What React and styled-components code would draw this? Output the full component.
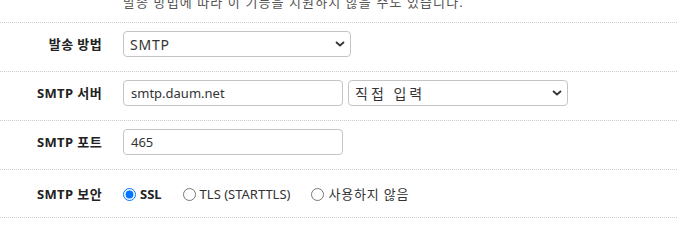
import React, { useState } from 'react';
import styled, { createGlobalStyle } from 'styled-components';

const GlobalStyle = createGlobalStyle`
  html, body {
    margin: 0;
    padding: 0;
    background: #fff;
    overflow: hidden;
  }
  body {
    font-family: "Noto Sans", "Noto Sans CJK KR", sans-serif;
    font-size: 13px;
    color: #333;
  }
`;

const securityOptions = [
  { value: 'ssl', text: 'SSL', spacing: 0 },
  { value: 'tls', text: 'TLS (STARTTLS)', spacing: 0 },
  { value: 'none', text: '사용하지 않음', spacing: 0.8 },
];

// 메일 발송 설정 폼
export default function App() {
  const [method, setMethod] = useState('smtp');
  const [server, setServer] = useState('smtp.daum.net');
  const [preset, setPreset] = useState('manual');
  const [port, setPort] = useState('465');
  const [secure, setSecure] = useState('ssl');

  return (
    <>
      <GlobalStyle />
      <Form>
        <HelpRow>
          <Label />
          <Help>발송 방법에 따라 이 기능을 지원하지 않을 수도 있습니다.</Help>
        </HelpRow>

        <Row>
          <Label>발송 방법</Label>
          <Field>
            <SelectBox width={228}>
              <Select value={method} onChange={(e) => setMethod(e.target.value)}>
                <option value="smtp">SMTP</option>
                <option value="mail">PHP mail()</option>
              </Select>
              <Chevron />
            </SelectBox>
          </Field>
        </Row>

        <Row>
          <Label>SMTP 서버</Label>
          <Field>
            <Input value={server} onChange={(e) => setServer(e.target.value)} />
            <SelectBox width={220}>
              <Select
                $spacing={3}
                value={preset}
                onChange={(e) => setPreset(e.target.value)}
              >
                <option value="manual">직접 입력</option>
                <option value="naver">네이버</option>
                <option value="daum">다음</option>
              </Select>
              <Chevron />
            </SelectBox>
          </Field>
        </Row>

        <Row>
          <Label>SMTP 포트</Label>
          <Field>
            <Input value={port} onChange={(e) => setPort(e.target.value)} />
          </Field>
        </Row>

        <RadioRow>
          <Label>SMTP 보안</Label>
          <Field gap={21}>
            {securityOptions.map((opt) => (
              <RadioLabel
                key={opt.value}
                $checked={secure === opt.value}
                $spacing={opt.spacing}
              >
                <Radio
                  type="radio"
                  name="secure"
                  checked={secure === opt.value}
                  onChange={() => setSecure(opt.value)}
                />
                {opt.text}
              </RadioLabel>
            ))}
          </Field>
        </RadioRow>
      </Form>
    </>
  );
}

function Chevron() {
  return (
    <ChevronIcon viewBox="0 0 10 6" width="10" height="6">
      <path d="M1 1l4 3.5L9 1" fill="none" stroke="#333" strokeWidth="1.8" />
    </ChevronIcon>
  );
}

const Form = styled.div`
  margin-top: -8px;
`;

const Row = styled.div`
  display: flex;
  align-items: center;
  padding: 8px 0 14px;
  border-bottom: 1px dotted #ccc;
`;

const HelpRow = styled(Row)`
  padding: 0 0 10px;
`;

const RadioRow = styled(Row)`
  padding: 14px 0 13px;
`;

const Label = styled.div`
  width: 102px;
  flex: none;
  padding-right: 21px;
  text-align: right;
  font-weight: 700;
  color: #222;
  line-height: 20px;
  letter-spacing: 0.4px;
`;

const Help = styled.div`
  line-height: 20px;
  color: #555;
  letter-spacing: 1.1px;
`;

const Field = styled.div`
  display: flex;
  align-items: center;
  gap: ${({ gap }) => gap ?? 5}px;
`;

const Input = styled.input`
  box-sizing: border-box;
  width: 220px;
  height: 26px;
  padding: 0 7px;
  border: 1px solid #c4c4c4;
  border-radius: 4px;
  font: inherit;
  color: #333;
  outline: none;
`;

const SelectBox = styled.div`
  position: relative;
  width: ${({ width }) => width}px;
`;

const Select = styled.select`
  appearance: none;
  box-sizing: border-box;
  width: 100%;
  height: 26px;
  padding: 0 24px 0 6px;
  border: 1px solid #c4c4c4;
  border-radius: 4px;
  background: #fff;
  font: inherit;
  font-size: 14px;
  letter-spacing: ${({ $spacing }) => $spacing ?? 0.8}px;
  color: #333;
  outline: none;
`;

const ChevronIcon = styled.svg`
  position: absolute;
  right: 6px;
  top: 10px;
  pointer-events: none;
`;

const RadioLabel = styled.label`
  display: flex;
  align-items: center;
  gap: 4px;
  line-height: 20px;
  letter-spacing: ${({ $spacing }) => $spacing}px;
  font-weight: ${({ $checked }) => ($checked ? 700 : 400)};
  color: ${({ $checked }) => ($checked ? '#222' : '#333')};
`;

const Radio = styled.input`
  width: 13px;
  height: 13px;
  margin: 0;
  accent-color: #0075ff;
`;
